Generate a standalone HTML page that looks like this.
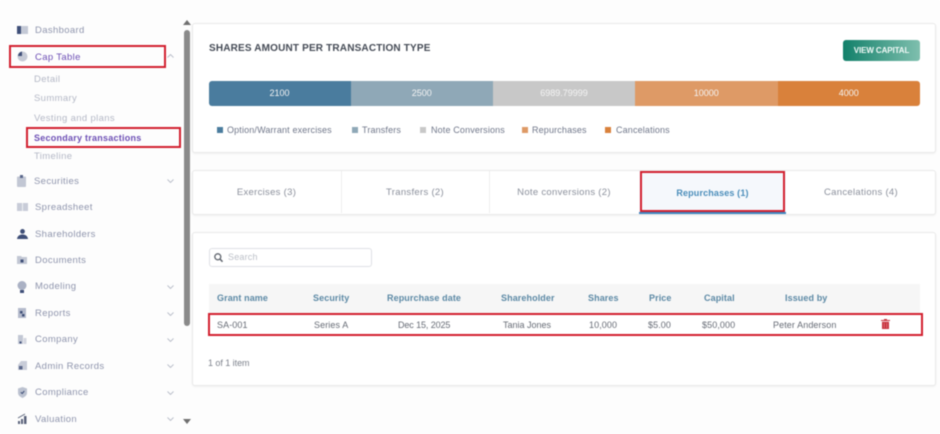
<!DOCTYPE html>
<html><head><meta charset="utf-8">
<style>
html,body{margin:0;padding:0;background:#fdfdfd;}
#p{position:relative;width:940px;height:434px;overflow:hidden;background:#fdfdfd;font-family:"Liberation Sans",sans-serif;filter:blur(.45px);}
#p div,#p span.t{position:absolute;}
.t{white-space:nowrap;line-height:12px;height:12px;font-size:9.5px;letter-spacing:.35px;}
.c{transform:translateX(-50%);}
.n{color:#8f95ad;margin-top:1px;}
.s{color:#b4b8c6;margin-top:1px;}
.card{background:#fff;border:1px solid #e9e9e9;border-radius:3px;box-shadow:0 1px 2px rgba(0,0,0,.05);box-sizing:border-box;}
.red{border:2px solid #d2202f;box-sizing:border-box;}
.seg{top:81px;height:25px;color:#f4f4f4;font-size:9px;line-height:25px;text-align:center;letter-spacing:0;}
.sq{width:6px;height:6px;top:127px;}
.lg{top:123.500px;color:#70778a;font-size:9px;letter-spacing:.15px;}
.th{top:291.500px;color:#5c89a5;font-weight:bold;font-size:9px;letter-spacing:.1px;}
.td{top:319px;color:#666b75;font-size:9px;letter-spacing:.1px;}
.tab{top:187px;color:#8b909c;font-size:9.5px;letter-spacing:.3px;}
.div{top:171px;width:1px;height:42px;background:#eee;}
svg{position:absolute;overflow:visible;}
</style></head><body>
<div id="p">

<!-- sidebar icons -->
<svg style="left:17px;top:26px" width="11" height="8"><rect width="4" height="8" fill="#3f4f78"/><rect x="4" width="7" height="8" fill="#c4c9d6"/></svg>
<svg style="left:17px;top:51px" width="11" height="11"><circle cx="5.500" cy="5.500" r="5" fill="#c6cad6"/><path d="M5 0.500V5H1A4.500 4.500 0 0 1 5 .5Z" fill="#3f4f78"/></svg>
<svg style="left:17px;top:175px" width="9" height="12"><rect y="1.500" width="9" height="10.500" rx="1" fill="#c2c7d4"/><rect x="3" width="3" height="3" fill="#59668a"/></svg>
<svg style="left:17px;top:203px" width="11" height="8"><rect width="11" height="8" fill="#c8ccd8"/><rect x="5" width="1" height="8" fill="#eef0f4"/></svg>
<svg style="left:17px;top:229px" width="11" height="10"><circle cx="5.500" cy="2.400" r="2.400" fill="#3f4f78"/><path d="M0 10C.5 6.500 3 5.500 5.500 5.500S10.500 6.500 11 10Z" fill="#3f4f78"/></svg>
<svg style="left:17px;top:256px" width="10" height="8"><path d="M0 0H4L5 1H10V8H0Z" fill="#c2c7d4"/><rect x="3.500" y="3.500" width="3" height="3" fill="#3f4f78"/></svg>
<svg style="left:17px;top:281px" width="10" height="12"><circle cx="5" cy="4.500" r="4.500" fill="#aab1c4"/><rect x="3" y="9" width="4" height="3" fill="#3f4f78"/></svg>
<svg style="left:18px;top:308px" width="8" height="10"><rect width="8" height="10" fill="#b4bacb"/><rect x="2" y="3" width="2.500" height="2.500" fill="#3f4f78"/><rect x="4" y="6" width="2.500" height="2.500" fill="#3f4f78"/></svg>
<svg style="left:18px;top:335px" width="9" height="9"><rect width="5" height="9" fill="#c2c7d4"/><rect x="5.500" y="3" width="3" height="6" fill="#d4d7e0"/><rect x="1.500" y="6.500" width="2" height="2" fill="#3f4f78"/></svg>
<svg style="left:18px;top:361px" width="9" height="9"><path d="M3 0H9V9H0V4Z" fill="#c8ccd8"/><rect x="1" y="5" width="3.500" height="3.500" fill="#59668a"/></svg>
<svg style="left:18px;top:387px" width="9" height="11"><path d="M4.500 0L9 1.500V6C9 8.500 6.500 10 4.500 11C2.500 10 0 8.500 0 6V1.500Z" fill="#bcc2d0"/><path d="M2.800 5.200L4.200 6.500L6.300 4" fill="none" stroke="#3f4f78" stroke-width="1"/></svg>
<svg style="left:18px;top:413px" width="9" height="11"><path d="M0 11V8H2V11ZM3 11V6H5V11ZM6 11V3H8.500V11Z" fill="#59627a"/><path d="M0 5L7 1" stroke="#59627a" stroke-width="1"/></svg>

<!-- sidebar text -->
<span class="t n" style="left:35px;top:24px">Dashboard</span>
<span class="t" style="left:35px;top:51.500px;color:#6d4fb5">Cap Table</span>
<span class="t s" style="left:34px;top:73px">Detail</span>
<span class="t s" style="left:34px;top:92px">Summary</span>
<span class="t s" style="left:34px;top:111.500px">Vesting and plans</span>
<span class="t" style="left:34px;top:131.500px;color:#6d4fb5;font-weight:bold;font-size:9px;letter-spacing:.25px">Secondary transactions</span>
<span class="t s" style="left:34px;top:150px">Timeline</span>
<span class="t n" style="left:34px;top:175px">Securities</span>
<span class="t n" style="left:35px;top:201px">Spreadsheet</span>
<span class="t n" style="left:35px;top:228px">Shareholders</span>
<span class="t n" style="left:35px;top:254px">Documents</span>
<span class="t n" style="left:35px;top:280px">Modeling</span>
<span class="t n" style="left:35px;top:307px">Reports</span>
<span class="t n" style="left:35px;top:333px">Company</span>
<span class="t n" style="left:35px;top:360px">Admin Records</span>
<span class="t n" style="left:35px;top:386px">Compliance</span>
<span class="t n" style="left:35px;top:413px">Valuation</span>

<!-- chevrons -->
<svg style="left:167px;top:54px" width="7" height="4"><path d="M.5 3.500L3.500 .5L6.500 3.500" fill="none" stroke="#b8bcc8" stroke-width=".9"/></svg>
<svg style="left:167px;top:179px" width="7" height="4"><path d="M.5 .5L3.500 3.500L6.500 .5" fill="none" stroke="#b8bcc8" stroke-width=".9"/></svg>
<svg style="left:167px;top:285px" width="7" height="4"><path d="M.5 .5L3.500 3.500L6.500 .5" fill="none" stroke="#b8bcc8" stroke-width=".9"/></svg>
<svg style="left:167px;top:312px" width="7" height="4"><path d="M.5 .5L3.500 3.500L6.500 .5" fill="none" stroke="#b8bcc8" stroke-width=".9"/></svg>
<svg style="left:167px;top:338px" width="7" height="4"><path d="M.5 .5L3.500 3.500L6.500 .5" fill="none" stroke="#b8bcc8" stroke-width=".9"/></svg>
<svg style="left:167px;top:364px" width="7" height="4"><path d="M.5 .5L3.500 3.500L6.500 .5" fill="none" stroke="#b8bcc8" stroke-width=".9"/></svg>
<svg style="left:167px;top:391px" width="7" height="4"><path d="M.5 .5L3.500 3.500L6.500 .5" fill="none" stroke="#b8bcc8" stroke-width=".9"/></svg>
<svg style="left:167px;top:417px" width="7" height="4"><path d="M.5 .5L3.500 3.500L6.500 .5" fill="none" stroke="#b8bcc8" stroke-width=".9"/></svg>

<!-- scrollbar -->
<div style="left:184px;top:30px;width:6px;height:296px;background:#8a8a8a;border-radius:3px"></div>
<svg style="left:183px;top:20px" width="8" height="5"><path d="M4 0L8 5H0Z" fill="#6f6f6f"/></svg>
<svg style="left:183px;top:419px" width="8" height="5"><path d="M0 0H8L4 5Z" fill="#6f6f6f"/></svg>

<!-- red outlines sidebar -->
<div class="red" style="left:8.500px;top:45px;width:157px;height:22.500px"></div>
<div class="red" style="left:25.500px;top:127px;width:155px;height:21px"></div>

<!-- card 1 -->
<div class="card" style="left:192px;top:23px;width:744px;height:130px"></div>
<span class="t" style="left:209px;top:42.500px;color:#444a55;font-weight:bold;font-size:10px;letter-spacing:.17px">SHARES AMOUNT PER TRANSACTION TYPE</span>
<div style="left:843px;top:40px;width:77px;height:21px;border-radius:3px;background:linear-gradient(90deg,#12806a,#7fbfae);color:#f2faf7;font-size:8px;font-weight:bold;line-height:21px;text-align:center;letter-spacing:-.1px">VIEW CAPITAL</div>

<div class="seg" style="left:208.500px;width:142px;background:#4a7c9e;border-radius:3px 0 0 3px">2100</div>
<div class="seg" style="left:350.500px;width:142.500px;background:#8fa8b7">2500</div>
<div class="seg" style="left:493px;width:142px;background:#c8c8c8">6989.79999</div>
<div class="seg" style="left:635px;width:142.500px;background:#de9a66">10000</div>
<div class="seg" style="left:777.500px;width:142.500px;background:#d9813b;border-radius:0 3px 3px 0">4000</div>

<div class="sq" style="left:217px;background:#4a7c9e"></div>
<span class="t lg" style="left:227px">Option/Warrant exercises</span>
<div class="sq" style="left:352px;background:#8fa8b7"></div>
<span class="t lg" style="left:362px">Transfers</span>
<div class="sq" style="left:420px;background:#c8c8c8"></div>
<span class="t lg" style="left:431px">Note Conversions</span>
<div class="sq" style="left:522px;background:#de9a66"></div>
<span class="t lg" style="left:532px">Repurchases</span>
<div class="sq" style="left:605px;background:#d9813b"></div>
<span class="t lg" style="left:616px">Cancelations</span>

<!-- tabs -->
<div class="card" style="left:192px;top:170px;width:744px;height:45px"></div>
<div class="div" style="left:341px"></div>
<div class="div" style="left:489px"></div>
<div style="left:639px;top:171px;width:147px;height:41px;background:#f5f8fc"></div>
<div style="left:638.500px;top:211.500px;width:147.500px;height:2.500px;background:#3d85c0"></div>
<div class="red" style="left:640px;top:171px;width:145px;height:41px"></div>
<span class="t tab c" style="left:266.500px">Exercises (3)</span>
<span class="t tab c" style="left:415px">Transfers (2)</span>
<span class="t tab c" style="left:564px">Note conversions (2)</span>
<span class="t tab c" style="left:712.500px;color:#4a8dba;font-weight:bold;font-size:9px;letter-spacing:.15px">Repurchases (1)</span>
<span class="t tab c" style="left:861px">Cancelations (4)</span>

<!-- table card -->
<div class="card" style="left:192px;top:232px;width:744px;height:154px"></div>
<div style="left:208.500px;top:248px;width:163.500px;height:19px;border:1px solid #dfe1e5;border-radius:3px;box-sizing:border-box;background:#fff"></div>
<svg style="left:214px;top:253px" width="9" height="10"><circle cx="3.800" cy="3.800" r="3" fill="none" stroke="#5f646d" stroke-width="1.300"/><path d="M6 6L8.500 8.800" stroke="#5f646d" stroke-width="1.500"/></svg>
<span class="t" style="left:228px;top:251px;color:#bcc0c8;font-size:9px;letter-spacing:.2px">Search</span>

<div style="left:208.500px;top:284px;width:711.500px;height:29px;background:#f6f6f6"></div>
<span class="t th" style="left:217px">Grant name</span>
<span class="t th" style="left:313px">Security</span>
<span class="t th" style="left:387px">Repurchase date</span>
<span class="t th" style="left:501px">Shareholder</span>
<span class="t th" style="left:588px">Shares</span>
<span class="t th" style="left:649px">Price</span>
<span class="t th" style="left:704px">Capital</span>
<span class="t th" style="left:785px">Issued by</span>

<div class="red" style="left:208px;top:313px;width:715px;height:23px"></div>
<span class="t td" style="left:217px">SA-001</span>
<span class="t td" style="left:314px">Series A</span>
<span class="t td" style="left:398px;letter-spacing:-.1px">Dec 15, 2025</span>
<span class="t td" style="left:503px;letter-spacing:0">Tania Jones</span>
<span class="t td" style="left:589px">10,000</span>
<span class="t td" style="left:648px">$5.00</span>
<span class="t td" style="left:702px">$50,000</span>
<span class="t td" style="left:773px">Peter Anderson</span>
<svg style="left:881px;top:319px" width="9" height="10"><path d="M3 0H6V1H9V2H0V1H3Z" fill="#c8343f"/><path d="M1 2.800H8V10H1Z" fill="#c8343f"/><path d="M3.200 4V9M5.800 4V9" stroke="#e68a90" stroke-width=".6"/></svg>

<span class="t" style="left:208px;top:357px;color:#7d828c;font-size:9px;letter-spacing:-.05px">1 of 1 item</span>
</div>
</body></html>
